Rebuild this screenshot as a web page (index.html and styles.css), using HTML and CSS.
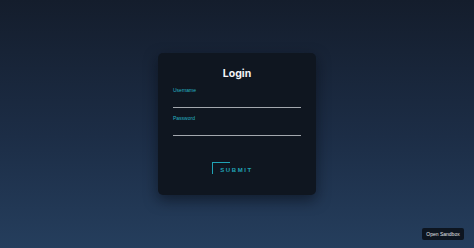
FILE: index.html
```html
<!DOCTYPE html>
<html lang="en">
<head>
<meta charset="utf-8">
<title>Login</title>
<link rel="stylesheet" href="styles.css">
</head>
<body>
<main class="stage">
  <form class="card">
    <h1 class="title">Login</h1>
    <div class="field">
      <label class="label" for="u">Username</label>
      <input class="input" id="u" type="text">
    </div>
    <div class="field field-second">
      <label class="label" for="p">Password</label>
      <input class="input" id="p" type="password">
    </div>
    <div class="actions">
      <button class="submit" type="button"><span class="corner"></span>SUBMIT</button>
    </div>
  </form>
</main>
<a class="sandbox" href="#">Open Sandbox</a>
</body>
</html>
```

FILE: styles.css
```css
html, body {
  margin: 0;
  height: 100%;
}
body {
  background: linear-gradient(to bottom, #141d2c 0%, #1c2d46 55%, #253e5d 100%);
  font-family: Inter, "Liberation Sans", sans-serif;
}
.stage {
  height: 248px;
  display: flex;
  align-items: center;
  justify-content: center;
}
.card {
  box-sizing: border-box;
  width: 158px;
  height: 142px;
  padding: 15px 15px 0 15px;
  background: #0f1620;
  border-radius: 5px;
  box-shadow: 0 5px 14px rgba(5, 10, 18, 0.55);
  display: flex;
  flex-direction: column;
}
.title {
  margin: 0 0 7px 0;
  font-size: 10.5px;
  line-height: 12px;
  font-weight: 700;
  color: #f2f4f7;
  text-align: center;
}
.field {
  display: flex;
  flex-direction: column;
}
.field-second {
  margin-top: 7px;
}
.label {
  font-family: "Liberation Sans", Arial, sans-serif;
  font-size: 5px;
  line-height: 6px;
  color: #26b2c4;
}
.input {
  box-sizing: border-box;
  height: 15px;
  margin: 0;
  padding: 0;
  background: transparent;
  border: none;
  border-bottom: 1px solid #a3a8ae;
  outline: none;
  color: #fff;
}
.actions {
  margin-top: 26px;
  display: flex;
  justify-content: center;
}
.submit {
  position: relative;
  margin: 0;
  padding: 5px 9px 3px 8px;
  background: transparent;
  border: none;
  font-family: "Liberation Sans", Arial, sans-serif;
  font-size: 6px;
  line-height: 7px;
  font-weight: 700;
  letter-spacing: 1.6px;
  color: #20a3b5;
}
.corner {
  position: absolute;
  left: 0;
  top: 0;
  width: 17px;
  height: 11px;
  border-top: 1px solid #20a3b5;
  border-left: 1px solid #20a3b5;
}
.sandbox {
  position: fixed;
  right: 10px;
  bottom: 8px;
  width: 42px;
  height: 12px;
  display: flex;
  align-items: center;
  justify-content: center;
  background: #0d1520;
  border-radius: 2px;
  font-family: "Liberation Sans", Arial, sans-serif;
  font-size: 5px;
  color: #e3e6ea;
  text-decoration: none;
}
```
